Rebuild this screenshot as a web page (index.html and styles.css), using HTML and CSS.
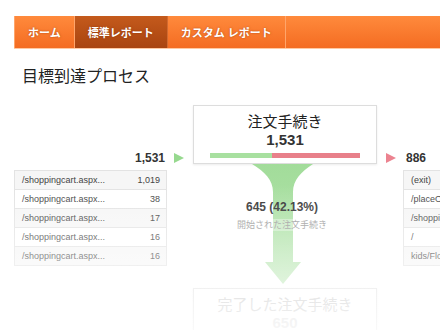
FILE: index.html
```html
<!DOCTYPE html>
<html lang="ja">
<head>
    <meta charset="UTF-8">
    <title>目標到達プロセス</title>
    <link rel="stylesheet" href="styles.css">
</head>
<body>

<nav class="tabs">
    <a class="tab" href="#">ホーム</a>
    <a class="tab active" href="#">標準レポート</a>
    <a class="tab" href="#">カスタム レポート</a>
    <span class="tab-rest"></span>
</nav>

<h1 class="title">目標到達プロセス</h1>

<section class="flow">
    <!-- entrances -->
    <div class="side side-in">
        <div class="count count-in">
            <span class="count-num">1,531</span>
            <span class="arrow arrow-green"></span>
        </div>
        <table class="pages">
            <tr><td>/shoppingcart.aspx...</td><td class="num">1,019</td></tr>
            <tr><td>/shoppingcart.aspx...</td><td class="num">38</td></tr>
            <tr><td>/shoppingcart.aspx...</td><td class="num">17</td></tr>
            <tr><td>/shoppingcart.aspx...</td><td class="num">16</td></tr>
            <tr><td>/shoppingcart.aspx...</td><td class="num">16</td></tr>
        </table>
    </div>

    <!-- steps -->
    <div class="steps">
        <div class="step">
            <div class="step-name">注文手続き</div>
            <div class="step-num">1,531</div>
            <div class="step-bar">
                <span class="bar-in" style="width: 41.3%"></span>
                <span class="bar-out"></span>
            </div>
        </div>
        <div class="drop">
            <svg class="drop-shape" width="184" height="120" viewBox="0 0 184 120">
                <defs>
                    <linearGradient id="g" x1="0" y1="0" x2="0" y2="1">
                        <stop offset="0" stop-color="#a2dc9a"/>
                        <stop offset="1" stop-color="#b8e6b1"/>
                    </linearGradient>
                </defs>
                <path d="M59 0 L120 0 C108 8 100 16 100 28 L100 98 L108 98 L90 120 L72 98 L80 98 L80 28 C80 16 72 8 59 0 Z" fill="url(#g)"/>
            </svg>
            <div class="drop-label">
                <div class="drop-num">645 (42.13%)</div>
                <div class="drop-text">開始された注文手続き</div>
            </div>
        </div>
        <div class="step step-next">
            <div class="step-name">完了した注文手続き</div>
            <div class="step-num">650</div>
        </div>
    </div>

    <!-- exits -->
    <div class="side side-out">
        <div class="count count-out">
            <span class="arrow arrow-red"></span>
            <span class="count-num">886</span>
        </div>
        <table class="pages pages-out">
            <tr><td>(exit)</td></tr>
            <tr><td>/placeOrder.aspx</td></tr>
            <tr><td>/shoppingcart.aspx</td></tr>
            <tr><td>/</td></tr>
            <tr><td>kids/Flowers.aspx</td></tr>
        </table>
    </div>
</section>

<div class="fade"></div>

</body>
</html>
```

FILE: styles.css
```css
body {
    margin: 0;
    width: 440px;
    height: 330px;
    overflow: hidden;
    position: relative;
    background: #ffffff;
    color: #222222;
    font-family: "Liberation Sans", "Noto Sans CJK JP", sans-serif;
}

/* orange tab bar */
.tabs {
    display: flex;
    margin: 16px 0 0 14px;
    height: 32px;
    background: linear-gradient(#ff8a3c, #f46c22);
    border-bottom: 1px solid #ffc9a3;
}

.tab {
    display: flex;
    align-items: center;
    padding: 0 13px;
    color: #ffffff;
    font-size: 11px;
    font-weight: bold;
    text-decoration: none;
    text-shadow: 0 0 2px rgba(120, 40, 0, 0.6);
    border-right: 1px solid #ffa56a;
}

.tab:first-child {
    border-left: 1px solid #ffa56a;
}

.tab.active {
    background: linear-gradient(#c45a1c, #a94410);
    border-right-color: #d26a30;
}

.tab-rest {
    flex: 1;
}

.title {
    margin: 16px 0 0 22px;
    font-size: 16px;
    font-weight: normal;
    line-height: 20px;
    color: #222222;
    font-family: "Noto Sans CJK JP", sans-serif;
}

/* funnel */
.flow {
    display: flex;
    margin-top: 20px;
    padding-left: 14px;
}

.side-in {
    width: 176px;
    flex-shrink: 0;
}

.side-out {
    width: 200px;
    flex-shrink: 0;
    padding-left: 3px;
}

.count {
    display: flex;
    align-items: center;
    height: 14px;
    margin-top: 46px;
}

.count-in {
    justify-content: flex-end;
    gap: 9px;
    padding-right: 6px;
}

.count-out {
    gap: 10px;
    padding-left: 6px;
}

.count-num {
    font-size: 12px;
    font-weight: bold;
    color: #333333;
}

.arrow {
    width: 0;
    height: 0;
    border-top: 5px solid transparent;
    border-bottom: 5px solid transparent;
}

.arrow-green {
    border-left: 10px solid #97d98f;
}

.arrow-red {
    border-left: 10px solid #ec8390;
}

.pages {
    margin-top: 5px;
    width: 153px;
    border-collapse: collapse;
    font-size: 9px;
    color: #444444;
}

.pages td {
    height: 18px;
    padding: 0 6px 0 7px;
    border: 1px solid #e3e3e3;
    border-left: none;
    border-right: none;
    white-space: nowrap;
}

.pages td:first-child {
    border-left: 1px solid #e3e3e3;
}

.pages td:last-child {
    border-right: 1px solid #e3e3e3;
}

.pages tr:nth-child(odd) {
    background: #f6f6f6;
}

.pages .num {
    text-align: right;
}

.pages-out {
    margin-left: 23px;
    width: 120px;
}

.steps {
    width: 184px;
    flex-shrink: 0;
    margin-left: 3px;
}

.step {
    height: 59px;
    border: 1px solid #dddddd;
    box-shadow: 0 1px 2px rgba(0, 0, 0, 0.08);
    text-align: center;
    box-sizing: border-box;
}

.step-name {
    margin-top: 5px;
    font-size: 15px;
    line-height: 20px;
    font-family: "Noto Sans CJK JP", sans-serif;
    color: #222222;
}

.step-num {
    font-size: 15px;
    font-weight: bold;
    line-height: 17px;
    color: #333333;
}

.step-bar {
    display: flex;
    margin: 5px 16px 0;
    height: 5px;
}

.bar-in {
    background: #a8e0a0;
}

.bar-out {
    flex: 1;
    background: #e8808a;
}

.drop {
    position: relative;
    height: 124px;
}

.drop-shape {
    position: absolute;
    left: 0;
    top: 0;
}

.drop-label {
    position: relative;
    padding-top: 36px;
    text-align: center;
    margin-left: -6px;
}

.drop-num {
    font-size: 12px;
    font-weight: bold;
    line-height: 14px;
    color: #333333;
}

.drop-text {
    display: inline-block;
    font-size: 9px;
    line-height: 12px;
    color: #999999;
    font-family: "Noto Sans CJK JP", sans-serif;
    background: rgba(255, 255, 255, 0.35);
}

.step-next .step-name {
    color: #bdbdbd;
}

.step-next .step-num {
    color: #d0d0d0;
}

/* page fades out toward the bottom */
.fade {
    position: absolute;
    left: 0;
    right: 0;
    top: 185px;
    bottom: 0;
    background: linear-gradient(rgba(255, 255, 255, 0), rgba(255, 255, 255, 0.82));
    pointer-events: none;
}
```
